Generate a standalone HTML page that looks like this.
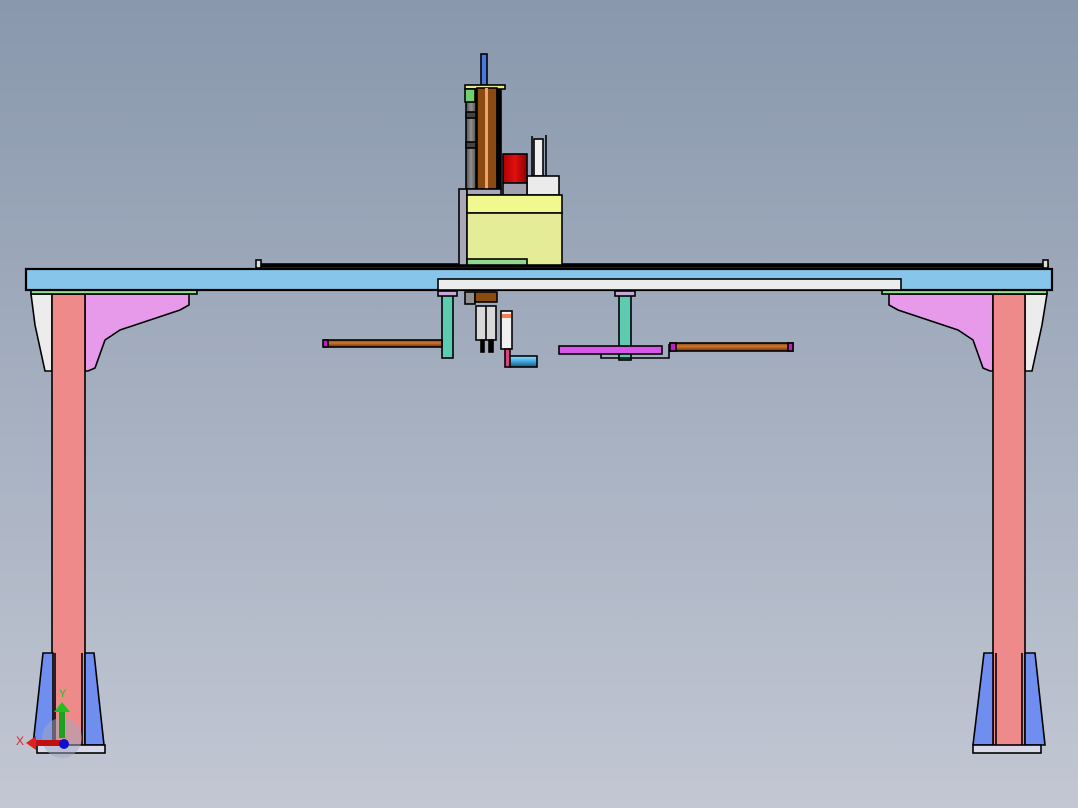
<!DOCTYPE html>
<html><head><style>html,body{margin:0;padding:0;width:1078px;height:808px;overflow:hidden}</style></head><body>
<svg width="1078" height="808" viewBox="0 0 1078 808" xmlns="http://www.w3.org/2000/svg">
<defs>
<linearGradient id="bg" x1="0" y1="0" x2="0" y2="1"><stop offset="0" stop-color="#8998ad"/><stop offset="1" stop-color="#c2c7d3"/></linearGradient>
<linearGradient id="rod" x1="0" y1="0" x2="0" y2="1"><stop offset="0" stop-color="#7a4010"/><stop offset="0.4" stop-color="#d07830"/><stop offset="1" stop-color="#6a3008"/></linearGradient>
<linearGradient id="cyl" x1="0" y1="0" x2="0" y2="1"><stop offset="0" stop-color="#8fe0ff"/><stop offset="0.5" stop-color="#40a8e0"/><stop offset="1" stop-color="#205070"/></linearGradient>
<linearGradient id="red" x1="0" y1="0" x2="1" y2="0"><stop offset="0" stop-color="#b00000"/><stop offset="0.5" stop-color="#e01010"/><stop offset="1" stop-color="#900000"/></linearGradient>
<linearGradient id="gcol" x1="0" y1="0" x2="1" y2="0"><stop offset="0" stop-color="#505050"/><stop offset="0.5" stop-color="#909090"/><stop offset="1" stop-color="#505050"/></linearGradient>
</defs>
<rect width="1078" height="808" fill="url(#bg)"/>
<g stroke="#000" stroke-width="1.6">
<path d="M31 294 H52 V371 H45 L35 325 Z" fill="#ececec"/>
<path d="M85 294 H189 V305 L180 310 L120 330 L105 340 L95 368 L88 371 H85 Z" fill="#e69ae9"/>
<rect x="52" y="294" width="33" height="454" fill="#ee8a8a"/>
<path d="M43 653 H53 V745 H33 Z" fill="#6f8ef0"/>
<path d="M85 653 H94 L104 745 H85 Z" fill="#6f8ef0"/>
<rect x="37" y="745" width="68" height="8" fill="#d8d8e8"/>
<line x1="55" y1="653" x2="55" y2="745"/><line x1="82" y1="653" x2="82" y2="745"/>
<path d="M1047 294 H1025 V371 H1032 L1042 325 Z" fill="#ececec"/>
<path d="M993 294 H889 V305 L898 310 L958 330 L973 340 L983 368 L990 371 H993 Z" fill="#e69ae9"/>
<rect x="993" y="294" width="32" height="454" fill="#ee8a8a"/>
<path d="M984 653 H993 V745 H973 Z" fill="#6f8ef0"/>
<path d="M1025 653 H1035 L1045 745 H1025 Z" fill="#6f8ef0"/>
<rect x="973" y="745" width="68" height="8" fill="#d8d8e8"/>
<line x1="996" y1="653" x2="996" y2="745"/><line x1="1022" y1="653" x2="1022" y2="745"/>
<rect x="31" y="290" width="166" height="4" fill="#90e090"/>
<rect x="882" y="290" width="165" height="4" fill="#90e090"/>
<rect x="26" y="269" width="1026" height="21" fill="#87c6ea" stroke-width="2.2"/>
<rect x="438" y="279" width="463" height="11" fill="#ececec"/>
<rect x="258" y="264" width="790" height="3" fill="#000"/>
<rect x="256" y="260" width="5" height="8" fill="#ddd"/><rect x="1043" y="260" width="5" height="8" fill="#ddd"/>
<rect x="481" y="54" width="6" height="31" fill="#4a78e0"/>
<rect x="465" y="85" width="40" height="4" fill="#e8e890"/>
<rect x="466" y="89" width="10" height="100" fill="url(#gcol)"/>
<rect x="465" y="89" width="10" height="13" fill="#70d070"/>
<rect x="466" y="112" width="10" height="6" fill="#444"/><rect x="466" y="142" width="10" height="6" fill="#444"/>
<rect x="477" y="88" width="20" height="101" fill="#8a4a10"/>
<rect x="485" y="88" width="3" height="101" fill="#f0a070" stroke="none"/>
<rect x="497" y="90" width="4" height="99" fill="#000"/>
<rect x="459" y="189" width="8" height="76" fill="#a8a8b8"/>
<rect x="467" y="189" width="34" height="6" fill="#a8a8b8"/>
<rect x="534" y="139" width="9" height="37" fill="#f0f0f0"/>
<line x1="546" y1="135" x2="546" y2="176"/><line x1="532" y1="136" x2="532" y2="176"/>
<rect x="527" y="176" width="32" height="19" fill="#ebebeb"/>
<rect x="503" y="154" width="24" height="29" fill="url(#red)"/>
<rect x="503" y="183" width="24" height="12" fill="#a0a0b0"/>
<rect x="467" y="195" width="95" height="18" fill="#f2f890"/>
<rect x="467" y="213" width="95" height="52" fill="#e4ec98"/>
<rect x="467" y="259" width="60" height="6" fill="#90d890"/>
<rect x="442" y="294" width="11" height="64" fill="#5ecab0"/>
<rect x="438" y="291" width="19" height="5" fill="#c8a8d8"/>
<rect x="619" y="294" width="12" height="66" fill="#5ecab0"/>
<rect x="615" y="291" width="20" height="5" fill="#c8a8d8"/>
<rect x="324" y="340" width="118" height="7" fill="url(#rod)"/>
<rect x="323" y="340" width="5" height="7" fill="#c020c0"/>
<rect x="559" y="346" width="103" height="8" fill="#d657e8"/>
<path d="M601 354 V358 H669 V344" fill="none"/>
<rect x="670" y="343" width="123" height="8" fill="url(#rod)"/>
<rect x="670" y="343" width="6" height="8" fill="#c020c0"/><rect x="788" y="343" width="5" height="8" fill="#c020c0"/>
<rect x="465" y="292" width="10" height="12" fill="#909090"/>
<rect x="475" y="292" width="22" height="10" fill="#8a4a10"/>
<rect x="476" y="306" width="20" height="34" fill="#d8d8d8"/>
<line x1="486" y1="306" x2="486" y2="340"/>
<rect x="481" y="340" width="3" height="12" fill="#000"/><rect x="489" y="340" width="4" height="12" fill="#000"/>
<rect x="501" y="311" width="11" height="38" fill="#f0f0f0"/>
<rect x="502" y="314" width="9" height="4" fill="#f08050" stroke="none"/>
<rect x="505" y="349" width="5" height="18" fill="#e04080"/>
<rect x="510" y="356" width="27" height="11" fill="url(#cyl)"/>
</g>
<circle cx="62" cy="738" r="20" fill="#a0a8c0" opacity="0.5"/>
<rect x="59" y="708" width="6" height="30" fill="#20a020"/>
<path d="M54 712 L62 702 L70 712 Z" fill="#20c020"/>
<rect x="34" y="740" width="30" height="6" fill="#c01010"/>
<path d="M36 736 L26 743 L36 750 Z" fill="#e02020"/>
<circle cx="64" cy="744" r="5" fill="#1010d0"/>
<text x="59" y="697" font-family="Liberation Sans, sans-serif" font-size="11" fill="#20c020">Y</text>
<text x="16" y="745" font-family="Liberation Sans, sans-serif" font-size="12" fill="#e02020">X</text>
</svg>
</body></html>
